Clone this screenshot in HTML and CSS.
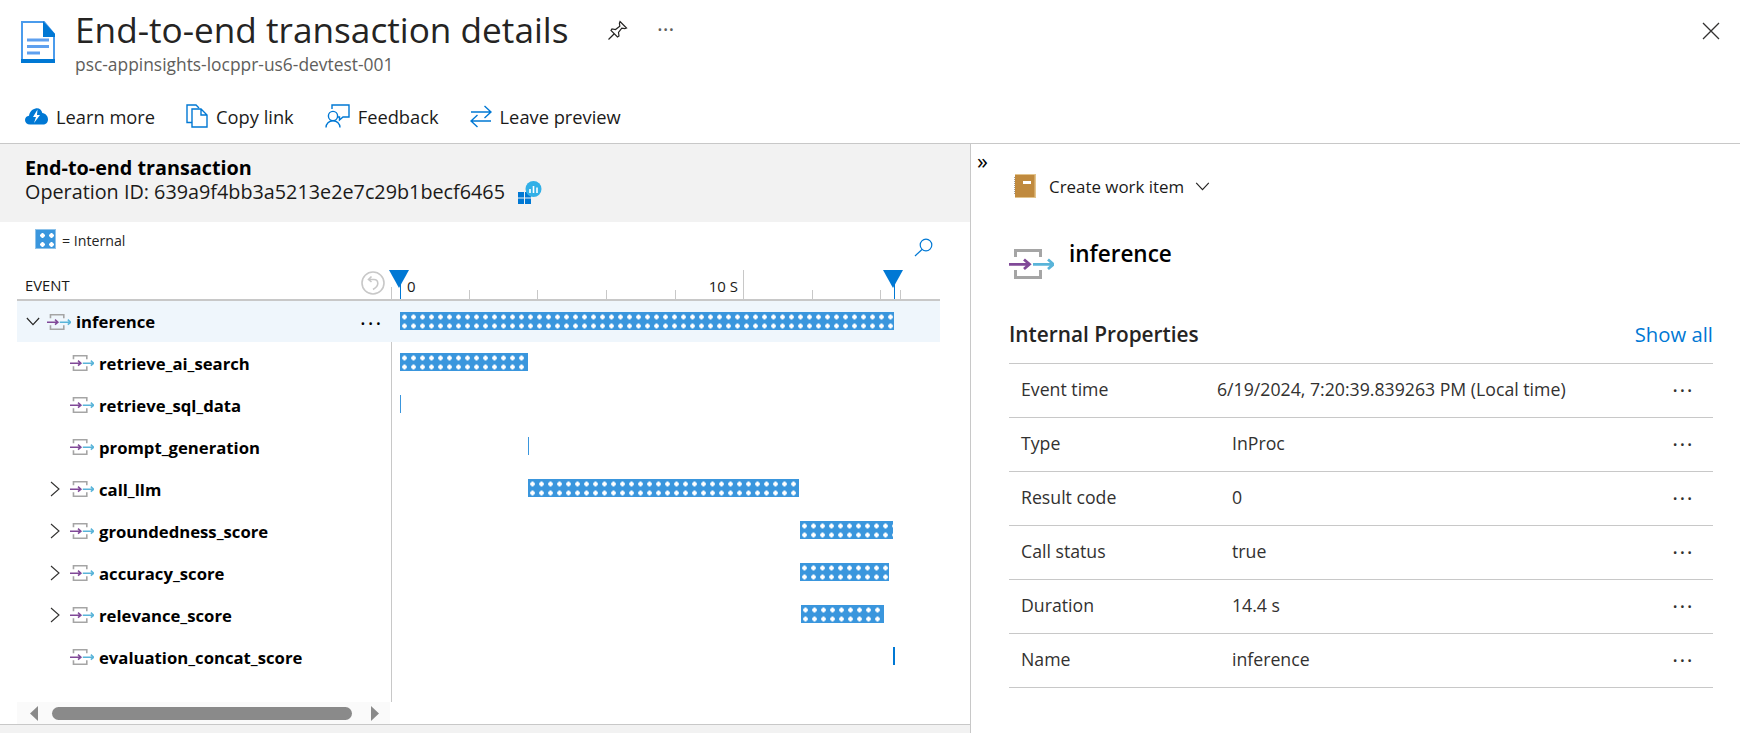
FILE: index.html
```html
<!DOCTYPE html>
<html lang="en">
<head>
    <meta charset="UTF-8">
    <meta name="viewport" content="width=device-width, initial-scale=1.0">
    <title>End-to-end transaction details</title>
    <link rel="stylesheet" href="styles.css">
</head>
<body>

<svg class="sprite" width="0" height="0">
    <symbol id="event" viewBox="0 0 45 30">
        <path d="M6.5 8V1.5H31.5V8M6.5 21V28.5H31.5V21" fill="none" stroke="#a5a5a5" stroke-width="3"/>
        <path d="M0 15.3H20M15 10.5L20.5 15.3L15 20" fill="none" stroke="#804998" stroke-width="2.8"/>
        <path d="M24 15.3H44M39 10.5L44.5 15.3L39 20" fill="none" stroke="#59b4d9" stroke-width="2.8"/>
    </symbol>
    <symbol id="chev-right" viewBox="0 0 10 16">
        <path d="M1 1L9 8L1 15" fill="none" stroke="#323130" stroke-width="1.1"/>
    </symbol>
    <symbol id="chev-down" viewBox="0 0 16 10">
        <path d="M1 1L8 8.5L15 1" fill="none" stroke="#252423" stroke-width="1.3"/>
    </symbol>
</svg>

<header class="blade-head">
    <svg class="doc-icon" viewBox="0 0 34 42">
        <path d="M1 1H23L33 13V41H1Z" fill="#fff" stroke="#4a9bec" stroke-width="2"/>
        <path d="M0 38H34V42H0Z" fill="#0078d4"/>
        <path d="M22 0L34 13V16H22Z" fill="#0078d4"/>
        <path d="M6 19H28M6 25.5H28M6 32H19" stroke="#5ea0ef" stroke-width="3"/>
    </svg>
    <div class="blade-titles">
        <h1>End-to-end transaction details</h1>
        <p>psc-appinsights-locppr-us6-devtest-001</p>
    </div>
    <svg class="pin-icon" viewBox="0 0 21 21">
        <path d="M13 1.5L19.5 8L17.8 8.6L14.8 8.2L11.5 12.5L12 16L10.5 17L4 10.5L5 9L8.5 9.5L12.8 6.2L12.4 3.2ZM7 14L1.5 19.5" fill="none" stroke="#252423" stroke-width="1.2"/>
    </svg>
    <span class="blade-more">&middot;&middot;&middot;</span>
    <svg class="close-icon" viewBox="0 0 18 18">
        <path d="M1 1L17 17M17 1L1 17" stroke="#323130" stroke-width="1.3"/>
    </svg>
</header>

<nav class="toolbar">
    <a class="tool tool-learn">
        <svg width="23" height="18" viewBox="0 0 23 18">
            <path d="M5 17.5C2 17.5 0 15.6 0 13C0 10.6 1.7 9 4 8.7C4.6 5.5 6.5 2.5 10.5 1.5C14 .8 16.5 2.6 17.3 6C20.6 6.5 23 9 23 12.5C23 15.6 20.8 17.5 18 17.5Z" fill="#0078d4"/>
            <path d="M12.5 2.5L8 10H11L9 16L15 8H12Z" fill="#fff"/>
        </svg>
        Learn more
    </a>
    <a class="tool tool-copy">
        <svg width="22" height="24" viewBox="0 0 22 24">
            <path d="M6 18.5H1V1H10L13 4" fill="none" stroke="#0078d4" stroke-width="1.4"/>
            <path d="M6 5H15L21 11V23H6Z M15 5V11H21" fill="none" stroke="#0078d4" stroke-width="1.4"/>
        </svg>
        Copy link
    </a>
    <a class="tool tool-feedback">
        <svg width="25" height="24" viewBox="0 0 25 24">
            <path d="M7 5V1H24V13H18L14.5 16V13H13" fill="none" stroke="#0078d4" stroke-width="1.4"/>
            <circle cx="8" cy="12" r="4.6" fill="none" stroke="#0078d4" stroke-width="1.4"/>
            <path d="M1 23.5C1 19.5 4 16.8 8 16.8C12 16.8 15 19.5 15 23.5" fill="none" stroke="#0078d4" stroke-width="1.4"/>
        </svg>
        Feedback
    </a>
    <a class="tool">
        <svg width="22" height="23" viewBox="0 0 22 23">
            <path d="M1 7H20.5M14.5 1L21 7L14.5 13M21 16H1.5M7.5 10L1 16L7.5 22" fill="none" stroke="#0078d4" stroke-width="1.4"/>
        </svg>
        Leave preview
    </a>
</nav>

<main class="panes">
    <section class="left-pane">
        <div class="op-head">
            <h2>End-to-end transaction</h2>
            <div class="op-id">
                Operation ID: 639a9f4bb3a5213e2e7c29b1becf6465
                <svg width="24" height="23" viewBox="0 0 24 23">
                    <path d="M0 11H6V16.5H0ZM7 11H13V16.5H7ZM0 17.5H6V23H0ZM7 17.5H13V23H7Z" fill="#0078d4"/>
                    <circle cx="15.5" cy="8" r="8" fill="#32b0e7"/>
                    <path d="M12 8V12M15.5 5V12M19 6.5V12" stroke="#fff" stroke-width="1.6"/>
                </svg>
            </div>
        </div>

        <div class="legend">
            <span class="swatch"></span>
            <span class="legend-text">= Internal</span>
            <svg class="search-icon" width="19" height="19" viewBox="0 0 19 19">
                <circle cx="12" cy="7" r="5.8" fill="none" stroke="#0078d4" stroke-width="1.2"/>
                <path d="M8 11.5L1 18" stroke="#0078d4" stroke-width="1.2"/>
            </svg>
        </div>

        <div class="tree">
            <div class="tree-head">
                <div class="col-label">
                    <span class="event-title">EVENT</span>
                    <svg class="undo-icon" width="24" height="24" viewBox="0 0 24 24">
                        <circle cx="12" cy="12" r="11" fill="#fff" stroke="#c8c8c8" stroke-width="1.6"/>
                        <path d="M10.5 5.5L7.5 8.5L10.5 11M8 8.5H13C15.5 8.5 16.8 10.5 16.8 12.5C16.8 15.5 14.5 17 12 18.5" fill="none" stroke="#c8c8c8" stroke-width="1.6"/>
                    </svg>
                </div>
                <div class="ruler">
                    <span class="tick" style="left: 77px"></span>
                    <span class="tick" style="left: 145px"></span>
                    <span class="tick" style="left: 214px"></span>
                    <span class="tick" style="left: 283px"></span>
                    <span class="tick tick-major" style="left: 351px"></span>
                    <span class="tick" style="left: 420px"></span>
                    <span class="tick" style="left: 488px"></span>
                    <span class="tick" style="left: 508px"></span>
                    <span class="ruler-zero">0</span>
                    <span class="ruler-ten">10 S</span>
                    <span class="marker" style="left: 8px"></span>
                    <span class="marker" style="left: 502px"></span>
                </div>
            </div>

            <div class="row row-selected">
                <div class="col-label">
                    <svg class="chev chev-open"><use href="#chev-down"/></svg>
                    <svg class="ev-icon ev-root"><use href="#event"/></svg>
                    <span class="ev-name">inference</span>
                    <span class="row-more">&middot;&middot;&middot;</span>
                </div>
                <div class="track"><span class="bar" style="margin-left: 8px; width: 494px"></span></div>
            </div>
            <div class="row">
                <div class="col-label col-child">
                    <svg class="ev-icon"><use href="#event"/></svg>
                    <span class="ev-name">retrieve_ai_search</span>
                </div>
                <div class="track"><span class="bar" style="margin-left: 8px; width: 128px"></span></div>
            </div>
            <div class="row">
                <div class="col-label col-child">
                    <svg class="ev-icon"><use href="#event"/></svg>
                    <span class="ev-name">retrieve_sql_data</span>
                </div>
                <div class="track"><span class="bar bar-thin" style="margin-left: 8px"></span></div>
            </div>
            <div class="row">
                <div class="col-label col-child">
                    <svg class="ev-icon"><use href="#event"/></svg>
                    <span class="ev-name">prompt_generation</span>
                </div>
                <div class="track"><span class="bar bar-thin" style="margin-left: 136px"></span></div>
            </div>
            <div class="row">
                <div class="col-label col-child">
                    <svg class="chev"><use href="#chev-right"/></svg>
                    <svg class="ev-icon"><use href="#event"/></svg>
                    <span class="ev-name">call_llm</span>
                </div>
                <div class="track"><span class="bar" style="margin-left: 136px; width: 271px"></span></div>
            </div>
            <div class="row">
                <div class="col-label col-child">
                    <svg class="chev"><use href="#chev-right"/></svg>
                    <svg class="ev-icon"><use href="#event"/></svg>
                    <span class="ev-name">groundedness_score</span>
                </div>
                <div class="track"><span class="bar" style="margin-left: 408px; width: 93px"></span></div>
            </div>
            <div class="row">
                <div class="col-label col-child">
                    <svg class="chev"><use href="#chev-right"/></svg>
                    <svg class="ev-icon"><use href="#event"/></svg>
                    <span class="ev-name">accuracy_score</span>
                </div>
                <div class="track"><span class="bar" style="margin-left: 408px; width: 89px"></span></div>
            </div>
            <div class="row">
                <div class="col-label col-child">
                    <svg class="chev"><use href="#chev-right"/></svg>
                    <svg class="ev-icon"><use href="#event"/></svg>
                    <span class="ev-name">relevance_score</span>
                </div>
                <div class="track"><span class="bar" style="margin-left: 409px; width: 83px"></span></div>
            </div>
            <div class="row">
                <div class="col-label col-child">
                    <svg class="ev-icon"><use href="#event"/></svg>
                    <span class="ev-name">evaluation_concat_score</span>
                </div>
                <div class="track"><span class="bar bar-thin bar-dark" style="margin-left: 501px"></span></div>
            </div>
            <div class="row-filler"><div class="col-label"></div></div>
        </div>

        <div class="h-scroll">
            <svg width="8" height="15" viewBox="0 0 8 15"><path d="M8 0V15L0 7.5Z" fill="#8a8a8a"/></svg>
            <span class="h-thumb"></span>
            <svg width="8" height="15" viewBox="0 0 8 15"><path d="M0 0V15L8 7.5Z" fill="#8a8a8a"/></svg>
        </div>
        <div class="left-foot"></div>
    </section>

    <section class="right-pane">
        <div class="collapse">&raquo;</div>
        <div class="work-item">
            <svg width="22" height="24" viewBox="0 0 22 24">
                <path d="M1 0H22V24H1Z" fill="#e3c48d"/>
                <path d="M1 1H20.5V23H1Z" fill="#c08a3e"/>
                <path d="M9 7H17V10H9Z" fill="#fff"/>
                <path d="M0 3V21" stroke="#a0a0a0" stroke-width="2" stroke-dasharray="1 1"/>
            </svg>
            <span>Create work item</span>
            <svg class="work-chev"><use href="#chev-down"/></svg>
        </div>
        <div class="detail-title">
            <svg class="detail-icon"><use href="#event"/></svg>
            <h3>inference</h3>
        </div>
        <div class="props-head">
            <h4>Internal Properties</h4>
            <a class="show-all">Show all</a>
        </div>
        <div class="props">
            <div class="prop"><span class="prop-key">Event time</span><span class="prop-val">6/19/2024, 7:20:39.839263 PM (Local time)</span><span class="prop-more">&middot;&middot;&middot;</span></div>
            <div class="prop"><span class="prop-key">Type</span><span class="prop-val prop-val-in">InProc</span><span class="prop-more">&middot;&middot;&middot;</span></div>
            <div class="prop"><span class="prop-key">Result code</span><span class="prop-val prop-val-in">0</span><span class="prop-more">&middot;&middot;&middot;</span></div>
            <div class="prop"><span class="prop-key">Call status</span><span class="prop-val prop-val-in">true</span><span class="prop-more">&middot;&middot;&middot;</span></div>
            <div class="prop"><span class="prop-key">Duration</span><span class="prop-val prop-val-in">14.4 s</span><span class="prop-more">&middot;&middot;&middot;</span></div>
            <div class="prop"><span class="prop-key">Name</span><span class="prop-val prop-val-in">inference</span><span class="prop-more">&middot;&middot;&middot;</span></div>
        </div>
    </section>
</main>

</body>
</html>
```

FILE: styles.css
```css
* {
    box-sizing: border-box;
}
html, body {
    height: 100%;
}
body {
    margin: 0;
    overflow: hidden;
    background: #fff;
    color: #252423;
    font-family: "Open Sans", "Noto Sans", Arial, sans-serif;
    font-size: 16px;
}
h1, h2, h3, h4, p {
    margin: 0;
}
svg {
    display: block;
    flex: none;
}
.sprite {
    position: absolute;
}

/* blade header */
.blade-head {
    height: 94px;
    display: flex;
    align-items: flex-start;
    padding-left: 21px;
}
.doc-icon {
    width: 34px;
    height: 42px;
    margin-top: 21px;
}
.blade-titles {
    margin-left: 20px;
    width: 532px;
}
.blade-titles h1 {
    font-size: 35.2px;
    font-weight: 400;
    line-height: 42px;
    margin-top: 8px;
    white-space: nowrap;
}
.blade-titles p {
    font-size: 17.4px;
    line-height: 22px;
    margin-top: 3px;
    color: #605e5c;
    white-space: nowrap;
}
.pin-icon {
    width: 21px;
    height: 21px;
    margin-top: 20px;
}
.blade-more {
    margin-left: 29px;
    margin-top: 13px;
    font-size: 22px;
    line-height: 30px;
    color: #605e5c;
}
.close-icon {
    width: 18px;
    height: 18px;
    margin-top: 22px;
    margin-left: auto;
    margin-right: 20px;
}

/* toolbar */
.toolbar {
    height: 50px;
    display: flex;
    align-items: center;
    padding: 0 0 5px 25px;
    border-bottom: 1px solid #c8c8c8;
}
.tool {
    display: flex;
    align-items: center;
    gap: 8px;
    font-size: 18.3px;
    color: #1b1a19;
    margin-right: 31px;
    white-space: nowrap;
}

.panes {
    display: flex;
    height: 590px;
}

/* left side */
.left-pane {
    width: 971px;
    flex: none;
    display: flex;
    flex-direction: column;
    border-right: 1px solid #c8c8c8;
}
.op-head {
    height: 78px;
    padding: 11px 0 0 25px;
    background: #f2f2f2;
}
.op-head h2 {
    font-size: 19.8px;
    line-height: 25px;
    font-weight: 700;
    color: #000;
}
.op-id {
    display: flex;
    align-items: center;
    gap: 13px;
    font-size: 19.8px;
    line-height: 24px;
    color: #1b1a19;
}
.legend {
    height: 48px;
    display: flex;
    align-items: flex-start;
    padding: 7px 0 0 35px;
    font-size: 14.2px;
    line-height: 22px;
    gap: 6px;
}
.legend-text {
    margin-top: 1px;
}
.swatch {
    width: 21px;
    height: 20px;
    background-color: #3a96dd;
    background-image: radial-gradient(circle at 4.5px 4.5px, #fff 2px, transparent 2.5px);
    background-size: 9px 9px;
    background-position: 2px 1px;
    border: 1px solid #8fc3ea;
}
.search-icon {
    margin-left: auto;
    margin-right: 37px;
    margin-top: 9px;
}
.tree {
    margin-left: 17px;
    width: 923px;
    flex: 1;
    display: flex;
    flex-direction: column;
}
.tree-head {
    height: 31px;
    display: flex;
    border-bottom: 2px solid #c8c8c8;
}
.col-label {
    width: 375px;
    flex: none;
    display: flex;
    align-items: center;
    border-right: 1px solid #c8c8c8;
}
.tree-head .col-label {
    border-right-color: transparent;
    position: relative;
    padding-left: 8px;
}
.event-title {
    font-size: 14.8px;
    margin-top: 1px;
    color: #1b1a19;
}
.undo-icon {
    position: absolute;
    left: 344px;
    top: 1px;
}
.ruler {
    flex: 1;
    position: relative;
}
.ruler::before {
    content: "";
    position: absolute;
    left: -1px;
    top: 17px;
    bottom: 0;
    border-left: 1px solid #c8c8c8;
}
.tick {
    position: absolute;
    bottom: 0;
    height: 9px;
    border-left: 1px solid #c8c8c8;
}
.tick-major {
    height: 29px;
}
.ruler-zero, .ruler-ten {
    position: absolute;
    top: 6px;
    font-size: 15px;
    line-height: 20px;
    color: #1b1a19;
}
.ruler-zero {
    left: 15px;
}
.ruler-ten {
    right: 202px;
}
.marker {
    position: absolute;
    top: 0;
    bottom: 0;
    border-left: 1px solid #0078d4;
}
.marker::before {
    content: "";
    position: absolute;
    left: -12px;
    top: 0;
    border-left: 10px solid transparent;
    border-right: 10px solid transparent;
    border-top: 18px solid #0078d4;
}

/* rows */
.row {
    height: 42px;
    display: flex;
}
.row-selected {
    height: 41px;
    background: #eff6fc;
}
.row-selected .col-label {
    border-right-color: transparent;
    padding-left: 9px;
    position: relative;
}
.row-filler {
    flex: 1;
    display: flex;
}
.col-child {
    padding-left: 53px;
    position: relative;
}
.chev {
    position: absolute;
    left: 33px;
    top: 13px;
    width: 10px;
    height: 16px;
}
.chev-open {
    position: static;
    width: 14px;
    height: 9px;
}
.ev-icon {
    width: 24px;
    height: 16px;
}
.ev-root {
    margin-left: 7px;
}
.ev-name {
    margin-left: 5px;
    font-size: 16.7px;
    font-weight: 700;
    color: #000;
    white-space: nowrap;
}
.row-more {
    position: absolute;
    left: 343px;
    top: 6px;
    font-size: 22px;
    line-height: 30px;
    letter-spacing: 2px;
    color: #000;
}
.track {
    flex: 1;
    padding-top: 11px;
}
.bar {
    display: block;
    height: 18px;
    background-color: #3a96dd;
    background-image: radial-gradient(circle at 4.5px 4.5px, #fff 2px, transparent 2.5px);
    background-size: 9px 9px;
    background-position: 0 .5px;
}
.bar-thin {
    width: 1px;
    background-image: none;
}
.bar-dark {
    width: 2px;
    background-color: #0078d4;
}

/* scroll strip */
.h-scroll {
    height: 22px;
    margin-left: 17px;
    width: 373px;
    background: #fafafa;
    display: flex;
    align-items: center;
    padding-left: 13px;
    flex: none;
}
.h-thumb {
    width: 300px;
    height: 13px;
    border-radius: 7px;
    background: #8a8a8a;
    margin: 0 19px 0 14px;
}
.left-foot {
    height: 10px;
    flex: none;
    background: #f2f2f2;
    border-top: 1px solid #c8c8c8;
}

/* right side */
.right-pane {
    flex: 1;
    padding: 0 27px 0 38px;
    position: relative;
}
.collapse {
    position: absolute;
    left: 6px;
    top: 4px;
    font-size: 22px;
    line-height: 24px;
    color: #000;
}
.work-item {
    display: flex;
    align-items: center;
    margin: 30px 0 0 5px;
    height: 24px;
    font-size: 16.9px;
    color: #1b1a19;
}
.work-item span {
    margin-left: 13px;
}
.work-chev {
    width: 15px;
    height: 9px;
    margin-left: 11px;
}
.detail-title {
    display: flex;
    align-items: flex-start;
    margin-top: 51px;
}
.detail-icon {
    width: 45px;
    height: 30px;
}
.detail-title h3 {
    font-size: 22.5px;
    font-weight: 600;
    line-height: 30px;
    margin: -10px 0 0 15px;
    color: #000;
}
.props-head {
    display: flex;
    align-items: center;
    justify-content: space-between;
    height: 28px;
    margin-top: 41px;
}
.props-head h4 {
    font-size: 20.8px;
    font-weight: 600;
    color: #252423;
}
.show-all {
    font-size: 20.3px;
    color: #0078d4;
}
.props {
    margin-top: 15px;
    border-top: 1px solid #c8c8c8;
}
.prop {
    height: 54px;
    display: flex;
    align-items: center;
    padding: 0 0 3px 12px;
    border-bottom: 1px solid #c8c8c8;
    font-size: 17.7px;
    color: #323130;
}
.prop-key {
    width: 196px;
}
.prop-val {
    flex: 1;
}
.prop-val-in {
    padding-left: 15px;
}
.prop-more {
    font-size: 22px;
    line-height: 22px;
    letter-spacing: 1.5px;
    margin-right: 19px;
    color: #323130;
}
```
